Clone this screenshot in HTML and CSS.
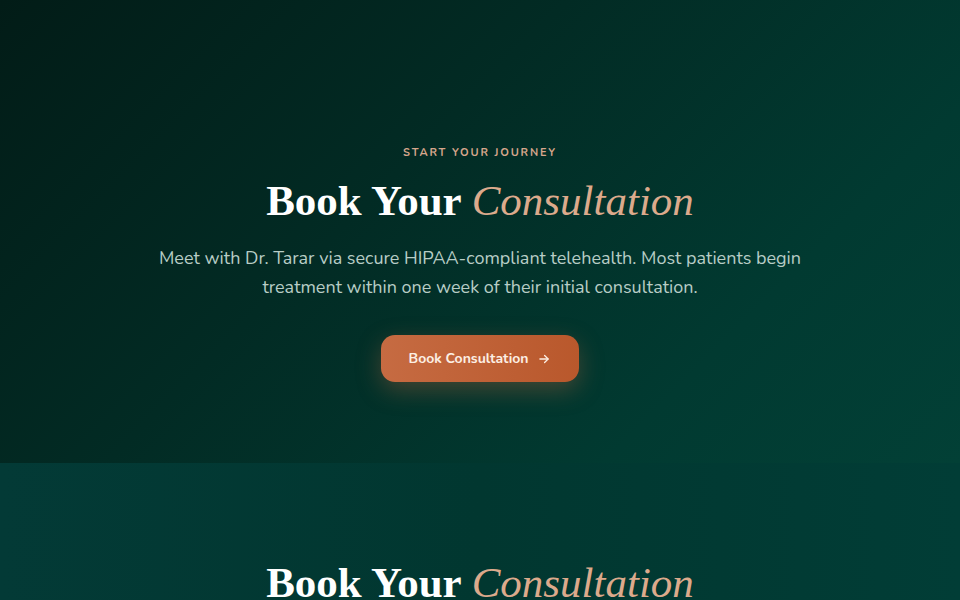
FILE: index.html
```html
<!DOCTYPE html>
<html lang="en">
<head>
<meta charset="utf-8">
<title>Book Your Consultation</title>
<link rel="stylesheet" href="styles.css">
</head>
<body>
<section class="cta">
  <div class="cta-inner">
    <p class="eyebrow">Start Your Journey</p>
    <h2 class="title">Book Your <em>Consultation</em></h2>
    <p class="lead">Meet with Dr. Tarar via secure HIPAA-compliant telehealth. Most patients begin treatment within one week of their initial consultation.</p>
    <a class="btn" href="#">Book Consultation
      <svg class="btn-icon" viewBox="0 0 24 24" width="14" height="14" fill="none" stroke="currentColor" stroke-width="2.2" stroke-linecap="round" stroke-linejoin="round"><path d="M5 12h14"/><path d="M13 6l6 6-6 6"/></svg>
    </a>
  </div>
</section>
<section class="booking">
  <h2 class="title">Book Your <em>Consultation</em></h2>
</section>
</body>
</html>
```
FILE: styles.css
```css
* { box-sizing: border-box; }
html, body { margin: 0; padding: 0; }
body {
  background: #013a32;
  font-family: "Nunito", "Lato", "Open Sans", sans-serif;
  overflow: hidden;
  height: 600px;
}
.cta {
  height: 463px;
  background: linear-gradient(135deg, #021c17 0%, #022b24 40%, #013a31 75%, #024036 100%);
  display: flex;
  justify-content: center;
  padding-top: 145px;
}
.cta-inner {
  display: flex;
  flex-direction: column;
  align-items: center;
  text-align: center;
}
.eyebrow {
  margin: 0;
  font-size: 11px;
  line-height: 16px;
  font-weight: 700;
  letter-spacing: 1.8px;
  text-transform: uppercase;
  color: #d6a68c;
}
.title {
  margin: 14px 0 0;
  font-family: "Liberation Serif", "Times New Roman", serif;
  font-weight: 700;
  font-size: 43px;
  line-height: 52px;
  color: #ffffff;
}
.title em {
  font-style: italic;
  font-weight: 400;
  color: #dcaa8c;
}
.lead {
  margin: 17px 0 0;
  width: 680px;
  font-size: 18px;
  line-height: 29px;
  color: #b8cdc6;
}
.btn {
  margin-top: 33px;
  width: 198px;
  height: 47px;
  display: flex;
  align-items: center;
  justify-content: center;
  gap: 9px;
  border-radius: 14px;
  background: linear-gradient(90deg, #c66b42, #b9582c);
  box-shadow: 0 8px 24px rgba(196, 103, 62, 0.35);
  color: #fcefe4;
  font-size: 14px;
  font-weight: 700;
  text-decoration: none;
}
.btn-icon { display: block; }
.booking {
  height: 137px;
  background: linear-gradient(90deg, #033a36 0%, #013730 50%, #013d36 100%);
  display: flex;
  justify-content: center;
  padding-top: 94px;
}
.booking .title { margin: 0; }
```
